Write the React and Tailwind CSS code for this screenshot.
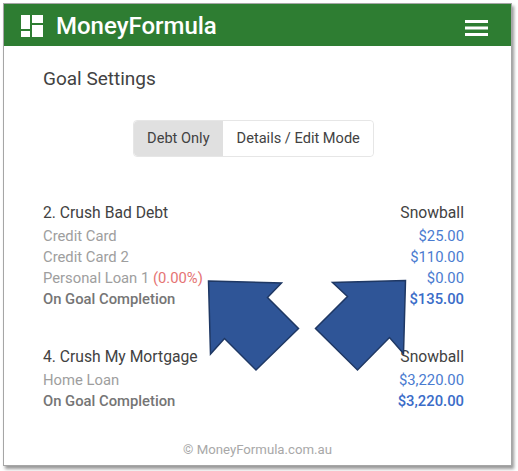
import React from 'react';

const goals = [
  {
    title: '2. Crush Bad Debt',
    method: 'Snowball',
    rows: [
      { name: 'Credit Card', amount: '$25.00' },
      { name: 'Credit Card 2', amount: '$110.00' },
      { name: 'Personal Loan 1', rate: '(0.00%)', amount: '$0.00' },
    ],
    total: '$135.00',
  },
  {
    title: '4. Crush My Mortgage',
    method: 'Snowball',
    rows: [{ name: 'Home Loan', amount: '$3,220.00' }],
    total: '$3,220.00',
  },
];

const LogoIcon = () => (
  <svg width="22" height="22" viewBox="0 0 22 22" fill="#fff" className="shrink-0 mt-[1px]">
    <rect x="0" y="0" width="9" height="14" />
    <rect x="11" y="0" width="11" height="8" />
    <rect x="0" y="16" width="9" height="6" />
    <rect x="11" y="10" width="11" height="12" />
  </svg>
);

const MenuIcon = () => (
  <svg width="23" height="16" viewBox="0 0 23 16" fill="#fff" className="mt-[5px]">
    <rect x="0" y="0" width="23" height="3" />
    <rect x="0" y="6.5" width="23" height="3" />
    <rect x="0" y="13" width="23" height="3" />
  </svg>
);

const Arrows = () => (
  <svg width="518" height="471" viewBox="0 0 518 471" className="absolute left-0 top-0 pointer-events-none">
    <polygon
      points="208.5,281 281.5,283 267.5,297.5 298.5,328.5 256,370 224.5,338.5 210.5,354"
      fill="#2f5597"
      stroke="#1f3864"
      strokeWidth="1.5"
    />
    <polygon
      points="405.5,280.5 332.5,282.5 347.5,296.5 315.5,328.5 357.5,370 389.5,337.5 403.5,353.5"
      fill="#2f5597"
      stroke="#1f3864"
      strokeWidth="1.5"
    />
  </svg>
);

const GoalBlock = ({ goal }) => (
  <div>
    <div className="flex justify-between h-[23px] mb-[2px] items-center text-[15.7px] text-[#424242]">
      <span>{goal.title}</span>
      <span>{goal.method}</span>
    </div>
    {goal.rows.map((row) => (
      <div key={row.name} className="flex justify-between h-[21px] items-center text-[14.8px] text-[#9e9e9e]">
        <span>
          {row.name}
          {row.rate && <span className="text-[#e57373]"> {row.rate}</span>}
        </span>
        <span className="text-[#4a7bd0]">{row.amount}</span>
      </div>
    ))}
    <div className="flex justify-between h-[21px] items-center text-[14.8px] font-medium text-[#757575]">
      <span>On Goal Completion</span>
      <span className="text-[#3a6cc8]">{goal.total}</span>
    </div>
  </div>
);

export default function App() {
  return (
    <div className="relative w-[518px] h-[471px] bg-white font-['Roboto',sans-serif] overflow-hidden">
      <div className="ml-[3px] mt-[3px] w-[509px] h-[463px] border border-[#a6a6a6] bg-white shadow-[2px_3px_3px_rgba(0,0,0,0.4)] flex flex-col">
        <div className="h-[42px] bg-[#2e7d32] flex items-center justify-between pl-[17px] pr-[23px] shrink-0">
          <div className="flex items-center gap-[13px]">
            <LogoIcon />
            <span className="pt-[2px] text-[24px] font-medium text-white">MoneyFormula</span>
          </div>
          <MenuIcon />
        </div>
        <div className="flex-1 flex flex-col pl-[39px] pr-[47px]">
          <h1 className="mt-[20px] h-[26px] flex items-center text-[19px] font-normal text-[#424242]">Goal Settings</h1>
          <div className="mt-[28px] flex justify-center">
            <div className="flex h-[37px] rounded border border-[#e6e6e6] text-[14.6px] text-[#424242]">
              <div className="flex items-center px-[13.5px] bg-[#e0e0e0] rounded-l">Debt Only</div>
              <div className="flex items-center px-[13.5px] bg-white rounded-r">Details / Edit Mode</div>
            </div>
          </div>
          <div className="mt-[44px] flex flex-col gap-[35px]">
            {goals.map((goal) => (
              <GoalBlock key={goal.title} goal={goal} />
            ))}
          </div>
        </div>
        <div className="mb-[5px] text-center text-[13.2px] text-[#a8a8a8]">© MoneyFormula.com.au</div>
      </div>
      <Arrows />
    </div>
  );
}
